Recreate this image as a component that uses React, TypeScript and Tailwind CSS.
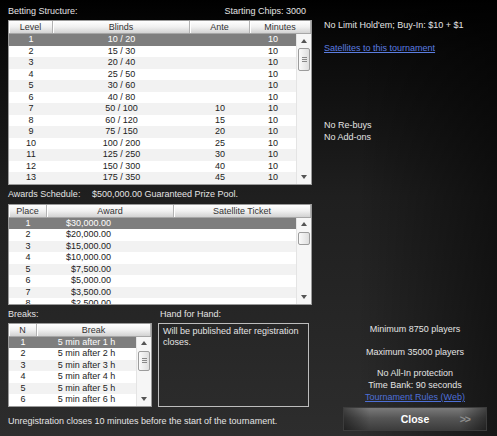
import React from "react";

type Col = { label: string; head: string; cell: string };

const blinds = [
  ["1", "10 / 20", "", "10"],
  ["2", "15 / 30", "", "10"],
  ["3", "20 / 40", "", "10"],
  ["4", "25 / 50", "", "10"],
  ["5", "30 / 60", "", "10"],
  ["6", "40 / 80", "", "10"],
  ["7", "50 / 100", "10", "10"],
  ["8", "60 / 120", "15", "10"],
  ["9", "75 / 150", "20", "10"],
  ["10", "100 / 200", "25", "10"],
  ["11", "125 / 250", "30", "10"],
  ["12", "150 / 300", "40", "10"],
  ["13", "175 / 350", "45", "10"],
];

const awards = [
  ["1", "$30,000.00", ""],
  ["2", "$20,000.00", ""],
  ["3", "$15,000.00", ""],
  ["4", "$10,000.00", ""],
  ["5", "$7,500.00", ""],
  ["6", "$5,000.00", ""],
  ["7", "$3,500.00", ""],
  ["8", "$2,500.00", ""],
];

const breaks = [1, 2, 3, 4, 5, 6].map((n) => [String(n), `5 min after ${n} h`]);

function Arrow({ down }: { down?: boolean }) {
  return (
    <div className="h-[13px] flex items-center justify-center">
      <svg width="6" height="4" viewBox="0 0 6 4">
        <path d={down ? "M0 0 L6 0 L3 4 Z" : "M0 4 L6 4 L3 0 Z"} fill="#555" />
      </svg>
    </div>
  );
}

function Scrollbar({ thumb, grip }: { thumb: string; grip?: boolean }) {
  return (
    <div className="w-[15px] shrink-0 flex flex-col bg-[#f6f6f6] border-l border-[#e4e4e4]">
      <Arrow />
      <div
        className={`${thumb} mt-[1px] w-[12px] mx-auto rounded-[2px] border border-[#9c9c9c] bg-gradient-to-r from-[#fafafa] to-[#dedede] flex flex-col items-center justify-center gap-[1px]`}
      >
        {grip && (
          <>
            <div className="w-[5px] h-[1px] bg-[#888]" />
            <div className="w-[5px] h-[1px] bg-[#888]" />
            <div className="w-[5px] h-[1px] bg-[#888]" />
          </>
        )}
      </div>
      <div className="flex-1" />
      <Arrow down />
    </div>
  );
}

function Grid({
  cols,
  rows,
  bodyH,
  thumb,
  grip,
  className = "",
}: {
  cols: Col[];
  rows: string[][];
  bodyH: string;
  thumb: string;
  grip?: boolean;
  className?: string;
}) {
  return (
    <div className={`border border-[#9a9a9a] bg-white ${className}`}>
      <div className="flex h-[13px] bg-gradient-to-b from-white via-[#f0f0f0] to-[#d2d2d2] border-b border-[#a6a6a6]">
        {cols.map((c, i) => (
          <div
            key={i}
            className={`${c.head} border-r border-[#b2b2b2] shadow-[inset_1px_0_0_#ffffff] text-center leading-[12px] text-[#333]`}
          >
            {c.label}
          </div>
        ))}
      </div>
      <div className={`flex ${bodyH}`}>
        <div className="flex-1 overflow-hidden">
          {rows.map((r, i) => (
            <div
              key={i}
              className={`flex h-[11.5px] leading-[11.5px] ${
                i === 0
                  ? "bg-[#7e7e7e] text-white"
                  : i % 2
                  ? "bg-white text-[#222]"
                  : "bg-[#f2f2f2] text-[#222]"
              }`}
            >
              {r.map((v, j) => (
                <div key={j} className={`${cols[j].cell} whitespace-nowrap`}>
                  {v}
                </div>
              ))}
            </div>
          ))}
        </div>
        <Scrollbar thumb={thumb} grip={grip} />
      </div>
    </div>
  );
}

export default function App() {
  return (
    <div className="w-[497px] h-[436px] overflow-hidden flex text-[9px] font-['Liberation_Sans',Arial,sans-serif] text-[#e4e4e4] bg-[linear-gradient(to_right,transparent_72%,rgba(0,0,0,0.5)),linear-gradient(to_bottom,#000_0%,#0b0b0b_12%,#1f1f1f_45%,#2d2d2d_100%)]">
      {/* Left column */}
      <div className="w-[320px] shrink-0 px-[8px] pt-[4px] flex flex-col">
        <div className="h-[14px] leading-[14px] flex justify-between pr-[6px]">
          <span>Betting Structure:</span>
          <span>Starting Chips: 3000</span>
        </div>
        <Grid
          className="mt-[2px]"
          cols={[
            { label: "Level", head: "w-[44px]", cell: "w-[44px] text-center" },
            { label: "Blinds", head: "w-[137px]", cell: "w-[137px] text-center" },
            { label: "Ante", head: "w-[60px]", cell: "w-[60px] text-center" },
            { label: "Minutes", head: "flex-1", cell: "flex-1 text-center" },
          ]}
          rows={blinds}
          bodyH="h-[149.5px]"
          thumb="h-[23px]"
          grip
        />

        <div className="h-[19px] leading-[19px] flex">
          <span className="w-[84px]">Awards Schedule:</span>
          <span>$500,000.00 Guaranteed Prize Pool.</span>
        </div>
        <Grid
          cols={[
            { label: "Place", head: "w-[38px]", cell: "w-[38px] text-center" },
            { label: "Award", head: "w-[127px]", cell: "w-[127px] text-right pr-[63px]" },
            { label: "Satellite Ticket", head: "flex-1", cell: "flex-1" },
          ]}
          rows={awards}
          bodyH="h-[86px]"
          thumb="h-[13px]"
        />

        <div className="h-[18px] leading-[18px] flex">
          <span className="w-[152px]">Breaks:</span>
          <span>Hand for Hand:</span>
        </div>
        <div className="flex gap-[6px]">
          <Grid
            className="w-[144px] shrink-0"
            cols={[
              { label: "N", head: "w-[28px]", cell: "w-[28px] text-center" },
              { label: "Break", head: "flex-1", cell: "flex-1 text-center" },
            ]}
            rows={breaks}
            bodyH="h-[69px]"
            thumb="h-[20px]"
            grip
          />
          <div className="w-[151px] border border-[#bdbdbd] px-[4px] pt-[2px] leading-[11px]">
            Will be published after registration closes.
          </div>
        </div>

        <div className="mt-[8px] leading-[12px]">
          Unregistration closes 10 minutes before the start of the tournament.
        </div>
      </div>

      {/* Right column */}
      <div className="flex-1 flex flex-col pl-[4px] pt-[19px] pb-[5px]">
        <div className="leading-[12px]">No Limit Hold'em; Buy-In: $10 + $1</div>
        <div className="mt-[11px] leading-[12px] text-[#5b7de0] underline">Satellites to this tournament</div>
        <div className="mt-[65px] leading-[12px]">No Re-buys</div>
        <div className="leading-[12px]">No Add-ons</div>
        <div className="flex-1" />
        <div className="ml-[19px] w-[144px] flex flex-col items-center text-center leading-[12px]">
          <div>Minimum 8750 players</div>
          <div className="mt-[11px]">Maximum 35000 players</div>
          <div className="mt-[9px]">No All-In protection</div>
          <div>Time Bank: 90 seconds</div>
          <div className="text-[#4d6fd6] underline">Tournament Rules (Web)</div>
          <button className="mt-[4px] w-[144px] h-[24px] relative border border-[#3c3c3c] bg-[linear-gradient(to_right,rgba(0,0,0,0.45),transparent_18%,transparent_82%,rgba(0,0,0,0.45)),linear-gradient(to_bottom,#7a7a7a,#565656_45%,#3c3c3c_100%)] flex items-center justify-center">
            <span className="font-bold text-[10.5px] text-white">Close</span>
            <span className="absolute right-[16px] top-[5px] text-[10.5px] font-bold text-[#8e8e8e] tracking-[-1px]">&gt;&gt;</span>
          </button>
        </div>
      </div>
    </div>
  );
}
